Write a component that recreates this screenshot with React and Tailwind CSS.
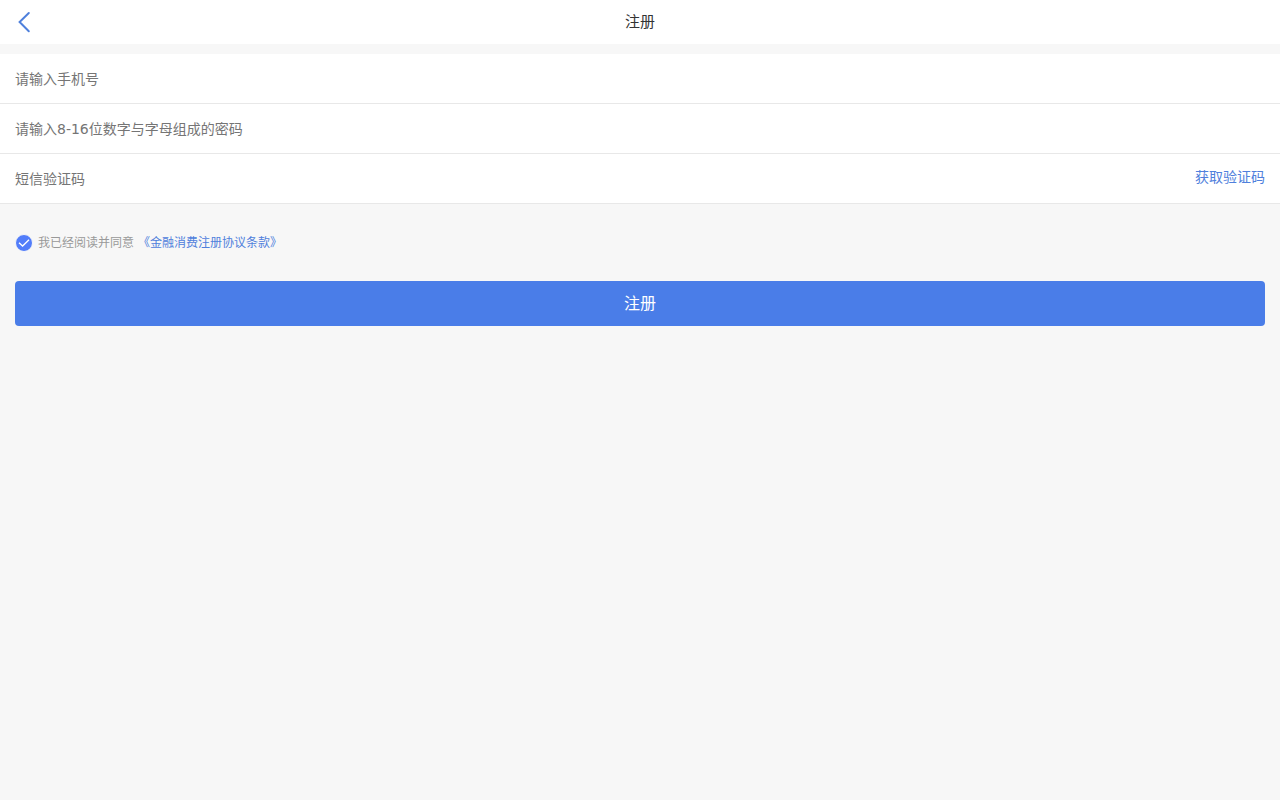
import React, { useState } from 'react';

const fields = [
  { id: 'phone', type: 'tel', label: '手机号', placeholder: '请输入手机号' },
  { id: 'password', type: 'password', label: '密码', placeholder: '请输入8-16位数字与字母组成的密码' },
  { id: 'code', type: 'text', label: '短信验证码', placeholder: '短信验证码', action: '获取验证码' },
];

function Header() {
  return (
    <header className="grid h-11 grid-cols-[1fr_auto_1fr] items-center bg-white px-[15px]">
      <button type="button" aria-label="返回" className="flex h-11 w-6 items-center">
        <svg width="18" height="22" viewBox="0 0 18 22" fill="none" stroke="#4f80dc" strokeWidth="2">
          <path d="M13.8 2 4.6 11 13.8 20.2" strokeLinecap="round" />
        </svg>
      </button>
      <h1 className="text-[15px] text-[#333]">注册</h1>
    </header>
  );
}

function Field({ id, type, label, placeholder, action }) {
  return (
    <div className="flex h-[50px] border-b border-[#e8e8e8] bg-white px-[15px]">
      <input
        id={id}
        type={type}
        aria-label={label}
        placeholder={placeholder}
        className="h-full min-w-0 flex-1 bg-transparent text-sm text-[#333] outline-none placeholder:text-[#757575]"
      />
      {action && (
        <button type="button" className="h-[46px] text-sm text-[#4f80dc]">
          {action}
        </button>
      )}
    </div>
  );
}

export default function App() {
  const [agreed, setAgreed] = useState(true);

  return (
    <div className="min-h-screen bg-[#f7f7f7] font-['DejaVu_Sans','Noto_Sans_CJK_SC',sans-serif]">
      <Header />
      <form className="mt-[10px]" onSubmit={(e) => e.preventDefault()}>
        {fields.map((field) => (
          <Field key={field.id} {...field} />
        ))}

        <div className="mt-[29px] flex h-5 items-center px-[15px] text-xs">
          <span className="relative mr-[5px] h-[18px] w-[18px]">
            <input
              id="agree"
              type="checkbox"
              checked={agreed}
              onChange={(e) => setAgreed(e.target.checked)}
              className="peer block h-[18px] w-[18px] appearance-none rounded-full border border-[#f7f7f7] bg-[#ccc] checked:bg-[#527dfa]"
            />
            <svg
              viewBox="0 0 18 18"
              fill="none"
              stroke="#fff"
              strokeWidth="1.3"
              className="pointer-events-none absolute inset-0 hidden peer-checked:block"
            >
              <path d="M4 8.7 7.6 12 14 5.8" />
            </svg>
          </span>
          <label htmlFor="agree" className="text-[#999]">我已经阅读并同意</label>
          <a href="#agreement" className="ml-1 text-[#4f80dc]">《金融消费注册协议条款》</a>
        </div>

        <div className="mt-7 px-[15px]">
          <button type="submit" className="h-[45px] w-full rounded bg-[#4a7de8] text-base text-white">
            注册
          </button>
        </div>
      </form>
    </div>
  );
}
